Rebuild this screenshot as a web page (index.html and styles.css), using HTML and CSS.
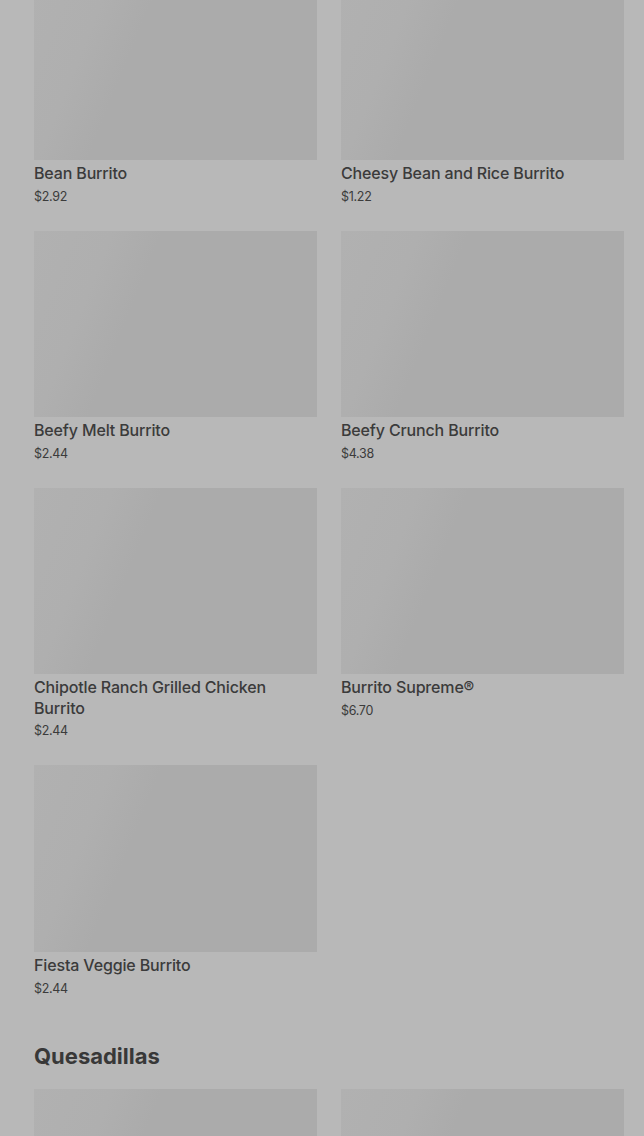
FILE: index.html
```html
<!DOCTYPE html>
<html>
<head>
	<title>Menu</title>
	<link rel="stylesheet" href="styles.css">
</head>
<body>
	<div class="menu">
		<div class="grid first">
			<div class="item">
				<div class="thumb"></div>
				<p class="name">Bean Burrito</p>
				<p class="price">$2.92</p>
			</div>
			<div class="item">
				<div class="thumb"></div>
				<p class="name">Cheesy Bean and Rice Burrito</p>
				<p class="price">$1.22</p>
			</div>
			<div class="item">
				<div class="thumb"></div>
				<p class="name">Beefy Melt Burrito</p>
				<p class="price">$2.44</p>
			</div>
			<div class="item">
				<div class="thumb"></div>
				<p class="name">Beefy Crunch Burrito</p>
				<p class="price">$4.38</p>
			</div>
			<div class="item">
				<div class="thumb"></div>
				<p class="name">Chipotle Ranch Grilled Chicken Burrito</p>
				<p class="price">$2.44</p>
			</div>
			<div class="item">
				<div class="thumb"></div>
				<p class="name">Burrito Supreme&reg;</p>
				<p class="price">$6.70</p>
			</div>
			<div class="item">
				<div class="thumb"></div>
				<p class="name">Fiesta Veggie Burrito</p>
				<p class="price">$2.44</p>
			</div>
		</div>

		<h2 class="section">Quesadillas</h2>
		<div class="grid">
			<div class="item">
				<div class="thumb"></div>
			</div>
			<div class="item">
				<div class="thumb"></div>
			</div>
		</div>
	</div>
</body>
</html>
```

FILE: styles.css
```css
body{
	margin:0;
	background-color:#b8b8b8;
	font-family:Inter, "Liberation Sans", sans-serif;
	color:#3b3b3b;
	overflow:hidden;
	height:1136px;
}
.menu{
	padding:0 20px 0 34px;
}
.grid{
	display:grid;
	grid-template-columns:283px 283px;
	column-gap:24px;
	row-gap:24px;
}
.first{
	margin-top:-26.7px;
}
.thumb{
	height:186.7px;
	background:linear-gradient(112deg, #b1b1b1 0%, #afafaf 22%, #ababab 36%, #ababab 100%);
}
.name{
	margin:3px 0 0;
	font-size:16px;
	font-weight:500;
	line-height:20.5px;
	letter-spacing:-0.15px;
}
.price{
	margin:3px 0 0;
	font-size:12.5px;
	line-height:20px;
	letter-spacing:-0.3px;
}
.section{
	margin:42px 0 18px;
	font-size:22px;
	font-weight:700;
	line-height:30px;
	color:#383838;
}
```
